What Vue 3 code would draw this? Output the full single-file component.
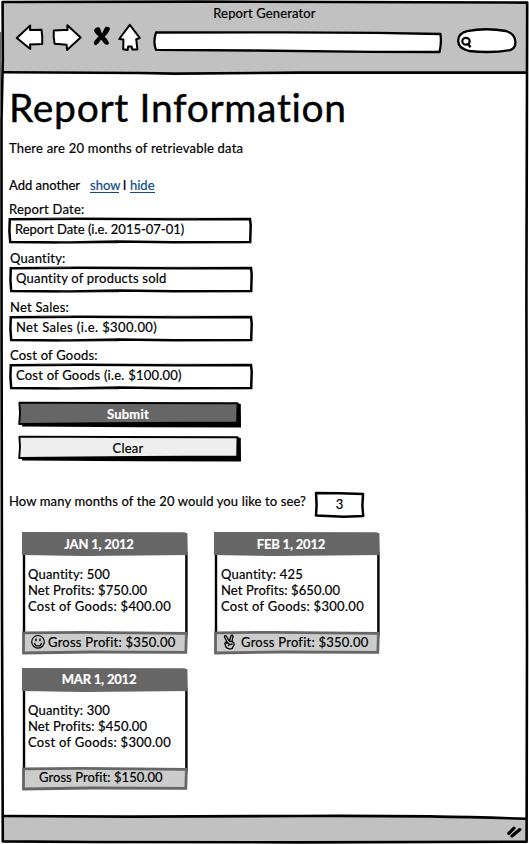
<script setup>
import { ref } from 'vue'

const fields = [
  { id: 'date', label: 'Report Date:', hint: 'Report Date (i.e. 2015-07-01)' },
  { id: 'quantity', label: 'Quantity:', hint: 'Quantity of products sold' },
  { id: 'sales', label: 'Net Sales:', hint: 'Net Sales (i.e. $300.00)' },
  { id: 'cost', label: 'Cost of Goods:', hint: 'Cost of Goods (i.e. $100.00)' },
]
const months = ref(3)
const reports = [
  { id: 'jan', date: 'JAN 1, 2012', quantity: 500, net: '$750.00', cost: '$400.00', gross: '$350.00', icon: 'smile' },
  { id: 'feb', date: 'FEB 1, 2012', quantity: 425, net: '$650.00', cost: '$300.00', gross: '$350.00', icon: 'peace' },
  { id: 'mar', date: 'MAR 1, 2012', quantity: 300, net: '$450.00', cost: '$300.00', gross: '$150.00', icon: '' },
]
</script>

<template>
  <div class="window">
    <svg class="frame" viewBox="0 0 529 844" width="529" height="844">
      <path d="M3 2L527 3V73L3 72Z" fill="#c1c1c1" />
      <path d="M3 816L300 816.5Q430 816 526 819V842L3 841Z" fill="#c1c1c1" />
      <g fill="none" stroke="#000" stroke-width="2.6" stroke-linejoin="round">
        <path d="M2.6 2L200 1.6L527.2 2.6L526.4 300L527 640L526.6 841.7L300 842.4L90 842L2.8 841.4L2 620L1.6 350L1.5 120L2.8 60Z" />
        <path d="M3 72.2L140 73L175 73.6L300 72.6L527 72.6" />
        <path d="M3 816L130 816.6L300 816Q430 815.4 526 818.8" />
      </g>
      <path d="M.4 32V117" stroke="#555" stroke-width="1" />
    </svg>

    <div class="page">
      <header class="browser">
        <div class="browser-title">Report Generator</div>
        <nav class="toolbar">
          <svg class="nav-icons" viewBox="0 0 130 30" width="130" height="30">
            <g fill="#fff" stroke="#000" stroke-width="2" stroke-linejoin="round">
              <path d="M1.8 15L15.2 2.5L15 7L26.5 6.8Q27.6 13 27.2 21L15 21.6L15.3 26Z" />
              <path d="M38.8 7.6Q46 6.6 52.5 7L52.4 2.3L65.6 14.4L52 27L51.6 21.7L39.6 20.8Q38.2 14 38.8 7.6Z" />
              <path d="M114.8 1.8L124.8 15L121.2 16.2L122.4 26.4L117.4 26.6L116.6 23.4L113.2 23.4L112.6 27L108.2 26.2L108.4 16.4L104.2 16Z" />
            </g>
            <path d="M79 7Q81 3 84.6 4.6L87 10.4L90.4 3.8Q96 3.2 94.6 7Q93 11 89.6 13.4Q93.4 17 94.2 20.5Q91.4 23.6 88.4 19.6L86 16.6Q84 20.4 81 22.2Q77.4 21.4 79.4 18L83.6 13.2Q79.4 10.4 79 7Z" />
          </svg>
          <svg class="address" viewBox="0 0 292 24" width="292" height="24">
            <path d="M4 2.5L130 2.4L225 2.8L288.4 4Q289.8 13 287.5 22L220 21.8L100 20.5L4 19.8Q.8 12 4 2.5Z" fill="#fff" stroke="#000" stroke-width="2.3" stroke-linejoin="round" />
          </svg>
          <svg class="search" viewBox="0 0 62 28" width="62" height="28">
            <path d="M11 4.2Q30 .4 50 4Q59 6.8 59.4 15Q59.6 21.2 54 23.1Q35 26.4 13 24Q2 21.4 2.2 13.6Q2.6 6.2 11 4.2Z" fill="#fff" stroke="#000" stroke-width="2.3" />
            <ellipse cx="10" cy="14.2" rx="3.7" ry="3.4" fill="none" stroke="#000" stroke-width="2.2" />
            <path d="M12 16.6L14.4 20.4" stroke="#000" stroke-width="2.4" />
          </svg>
        </nav>
      </header>

      <main class="content">
        <h1>Report Information</h1>
        <p class="available">There are 20 months of retrievable data</p>
        <div class="toggle">
          <span class="add">Add another</span><a class="show">show</a><span class="bar">I</span><a class="hide">hide</a>
        </div>

        <form class="form">
          <div v-for="f in fields" :key="f.id" :class="['field', f.id]">
            <label>{{ f.label }}</label>
            <div class="sketch input">
              <svg viewBox="0 0 244 27" width="244" height="27">
                <path d="M1.8 2.3L70 1.7L170 2.2L242 1.9L242.7 8L242.2 25L165 25.3L110 24.6L60 25.6L2.2 25L1.4 14Z" fill="#fff" stroke="#000" stroke-width="2.5" stroke-linejoin="miter" />
                <path d="M30 .9H62M155 .9H190M50 26.4H110M205 26.4H235" stroke="#999" stroke-width=".6" />
              </svg>
              <span>{{ f.hint }}</span>
            </div>
          </div>
          <div v-for="b in ['Submit', 'Clear']" :key="b" :class="['sketch', 'button', b.toLowerCase()]">
            <svg viewBox="0 0 224 27" width="224" height="27">
              <path d="M4 5L221 2.5L222.8 3L223 26.5L120 26.2L4 25.6Z" />
              <path class="face" d="M1.4 1.6L100 2L219.5 2.3L219.2 21.5L120 22L1.2 23L2 12Z" stroke="#000" stroke-width="1.9" stroke-linejoin="round" />
            </svg>
            <span>{{ b }}</span>
          </div>
        </form>

        <div class="months">
          <span class="question">How many months of the 20 would you like to see?</span>
          <div class="sketch count">
            <svg viewBox="0 0 51 28" width="51" height="28">
              <path d="M2 2L25 2.2L49 2.9L48.4 15L49.2 25L30 25.8L2 24.4L2.6 14Z" fill="#fff" stroke="#000" stroke-width="2.5" stroke-linejoin="round" />
            </svg>
            <span>{{ months }}</span>
          </div>
        </div>

        <section class="cards">
          <article v-for="r in reports" :key="r.id" :class="['sketch', 'card', r.id]">
            <svg viewBox="0 0 166 123" width="166" height="123">
              <path d="M2 20V104M164.4 20V104" stroke="#000" stroke-width="2.4" />
              <path d="M0 0L162 .2L165.4 1.3L165.8 23L120 23.4L60 24L0 23Z" fill="#666" />
              <path d="M1.5 100.8L60 100.3L164.4 101.3L163.8 120.4L70 120L1.5 121Z" fill="#ccc" stroke="#666" stroke-width="2.8" />
            </svg>
            <div class="card-text">
              <h2>{{ r.date }}</h2>
              <div class="lines">
                <div class="qty">Quantity: {{ r.quantity }}</div>
                <div class="net">Net Profits: {{ r.net }}</div>
                <div class="cog">Cost of Goods: {{ r.cost }}</div>
              </div>
              <div class="gross">
                <svg v-if="r.icon === 'smile'" viewBox="0 0 16 16" width="16" height="16" fill="none" stroke="#000" stroke-width="1.2">
                  <circle cx="8" cy="7.8" r="6.3" />
                  <path d="M4.4 8.8Q5 12 8 12T11.6 8.8" />
                  <path d="M6 4.6V7.2M10 4.6V7.2" stroke-width="1.4" />
                </svg>
                <svg v-else-if="r.icon === 'peace'" viewBox="0 0 16 16" width="16" height="16" fill="none" stroke="#000" stroke-width="1.3" stroke-linejoin="round">
                  <path d="M5 8L2.4 2.7Q3 1.1 4.3 2L7.3 7.2L9.2 1.3Q11 .8 11 2.4L10 7.6Q12.6 8.3 12 11L10 14.6Q5.6 15.6 4 13.2L2.8 9.5Q3.4 7.6 5 8L7.4 10.5L6 12M7.3 7.2L10 7.6M4 9.5L6.3 8.4M7.6 10.6L10.6 10" />
                </svg>
                <span>Gross Profit: {{ r.gross }}</span>
              </div>
            </div>
          </article>
        </section>
      </main>

      <footer class="status">
        <svg viewBox="0 0 18 16" width="18" height="16" stroke="#000" stroke-width="3.2" stroke-linecap="round">
          <path d="M2.8 9.4L8 4.2M6 12L13.8 5.6" />
        </svg>
      </footer>
    </div>
  </div>
</template>

<style>
body { margin: 0; background: #fff; }
</style>

<style scoped>
.window { display: grid; width: 529px; height: 844px; overflow: hidden; font: 13px/16px Lato, "Liberation Sans", sans-serif; color: #000; -webkit-text-stroke: .2px currentColor; }
.frame, .page { grid-area: 1 / 1; }
svg { display: block; flex: none; }
.page { display: flex; flex-direction: column; min-width: 0; }
.browser { height: 74px; }
.browser-title { padding-top: 5px; text-align: center; letter-spacing: .15px; }
.toolbar { display: flex; padding-left: 15px; }
.nav-icons { margin-top: 2px; }
.address { margin: 9px 0 0 7px; }
.search { margin: 6px 0 0 12px; }
.content { flex: 1; padding-left: 9px; }
h1 { margin: 10px 0 0; font-size: 39px; line-height: 46px; font-weight: 400; letter-spacing: .67px; -webkit-text-stroke: .4px #000; }
.available { margin: 10px 0 0; letter-spacing: .22px; }
.toggle { display: flex; margin-top: 21px; letter-spacing: 0; }
.add { width: 81px; }
.toggle a { color: #0b4a8f; border-bottom: 1px solid #0b4a8f; height: 15px; }
.show { width: 29px; }
.bar { width: 11px; text-align: center; }
.hide { width: 25px; }
.form { padding-top: 8px; letter-spacing: .22px; }
.field { height: 49px; }
.field.sales { height: 48px; }
.field label { display: block; height: 16px; }
.field:not(.date) { padding-left: 1px; }
.sketch { display: grid; }
.sketch > * { grid-area: 1 / 1; }
.input { width: 244px; height: 27px; margin-left: -1px; }
.input span { padding: 4px 0 0 7px; }
.date .input span { letter-spacing: 0; }
.sales .input span { letter-spacing: .4px; }
.button { width: 224px; height: 27px; margin: 7px 0 0 9px; text-align: center; }
.submit { margin-top: 5px; color: #fff; font-weight: 700; }
.submit .face { fill: #666; }
.clear .face { fill: #eee; }
.button span { padding: 5px 4px 0 0; }
.months { display: flex; height: 28px; margin-top: 29px; letter-spacing: .13px; }
.question { width: 305px; padding-top: 2px; white-space: nowrap; }
.count { width: 51px; text-align: center; }
.count span { padding-top: 5px; }
.cards { display: grid; grid-template-columns: 166px 166px; gap: 13px 26px; padding: 13px 0 0 13px; }
.card { height: 123px; letter-spacing: .3px; }
h2 { margin: 0; padding: 4px 12px 14px 0; text-align: center; font-size: 13px; line-height: 16px; font-weight: 700; letter-spacing: -.2px; color: #fff; }
.mar h2 { padding: 3px 12px 15px 0; }
.lines { height: 68px; padding: 0 0 0 6px; }
.feb .lines { padding-left: 7px; }
.qty { letter-spacing: .18px; }
.net { letter-spacing: .12px; }
.mar .lines { height: 67px; }
.gross { display: flex; padding-left: 8px; letter-spacing: .24px; }
.gross span { padding-left: 2px; }
.feb .gross span { padding-left: 3px; }
.mar .gross { letter-spacing: .06px; }
.mar .gross span { padding-left: 9px; }
.status { display: flex; justify-content: flex-end; height: 28px; padding: 8px 5px 0 0; box-sizing: border-box; }
</style>
